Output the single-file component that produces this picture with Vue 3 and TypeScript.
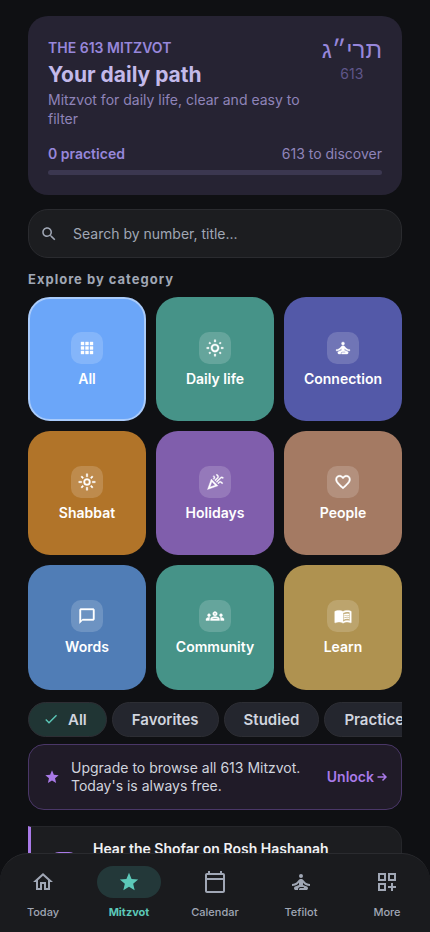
<script setup lang="ts">
import { ref } from 'vue'

interface Category { label: string; icon: string; color: string }

const icons: Record<string, string> = {
  search: 'M15.5 14h-.79l-.28-.27C15.41 12.59 16 11.11 16 9.5 16 5.91 13.09 3 9.5 3S3 5.91 3 9.5 5.91 16 9.5 16c1.61 0 3.09-.59 4.23-1.57l.27.28v.79l5 4.99L20.49 19l-4.99-5zm-6 0C7.01 14 5 11.99 5 9.5S7.01 5 9.5 5 14 7.01 14 9.5 11.99 14 9.5 14z',
  apps: 'M4 8h4V4H4v4zm6 12h4v-4h-4v4zm-6 0h4v-4H4v4zm0-6h4v-4H4v4zm6 0h4v-4h-4v4zm6-10v4h4V4h-4zm-6 4h4V4h-4v4zm6 6h4v-4h-4v4zm0 6h4v-4h-4v4z',
  daily: 'M12 6.5a5.5 5.5 0 1 0 0 11 5.5 5.5 0 0 0 0-11zm0 2.2a3.3 3.3 0 1 1 0 6.6 3.3 3.3 0 0 1 0-6.6zM11 1h2v3h-2zM11 20h2v3h-2zM1 11h3v2H1zM20 11h3v2h-3zM5 3.9l1.6 1.6-1.4 1.4-1.6-1.6zM19 3.9l1.4 1.4-1.6 1.6-1.4-1.4zM5.2 17.1l1.4 1.4L5 20.1l-1.4-1.4zM18.8 17.1l1.6 1.6-1.4 1.4-1.6-1.6z',
  sunny: 'M12 7.3a4.7 4.7 0 1 0 0 9.4 4.7 4.7 0 0 0 0-9.4zm0 2a2.7 2.7 0 1 1 0 5.4 2.7 2.7 0 0 1 0-5.4zM11 1h2v4h-2zM11 19h2v4h-2zM1 11h4v2H1zM19 11h4v2h-4zM5.2 3.8l2.4 2.4-1.4 1.4-2.4-2.4zM18.8 3.8l1.4 1.4-2.4 2.4-1.4-1.4zM6.2 16.4l1.4 1.4-2.4 2.4-1.4-1.4zM17.8 16.4l2.4 2.4-1.4 1.4-2.4-2.4z',
  meditate: 'M12 4a2 2 0 1 0 0 4 2 2 0 0 0 0-4zM21 16v-2c-2.24 0-4.16-.96-5.6-2.68l-1.34-1.6C13.68 9.26 13.12 9 12.53 9h-1.05c-.6 0-1.15.26-1.53.72l-1.34 1.6C7.16 13.04 5.24 14 3 14v2c2.77 0 5.19-1.17 7-3.25V15l-3.88 1.55C5.45 16.82 5 17.48 5 18.21 5 19.2 5.8 20 6.79 20H9v-.5c0-1.38 1.12-2.5 2.5-2.5h3c.28 0 .5.22.5.5s-.22.5-.5.5h-3c-.83 0-1.5.67-1.5 1.5v.5h7.21c.99 0 1.79-.8 1.79-1.79 0-.73-.45-1.39-1.12-1.66L14 15v-2.25c1.81 2.08 4.23 3.25 7 3.25z',
  party: 'M2 22l14-5-9-9-5 14zm10.35-5.82L5.3 18.7l2.52-7.05 4.53 4.53zM14.53 12.53l5.59-5.59c.49-.49 1.28-.49 1.77 0l.59.59 1.06-1.06-.59-.59c-1.07-1.07-2.82-1.07-3.89 0l-5.59 5.59 1.06 1.06zM10.06 6.88l-.59.59 1.06 1.06.59-.59c1.07-1.07 1.07-2.82 0-3.89l-.59-.59-1.06 1.07.59.59c.48.48.48 1.28 0 1.76zM17.06 11.88l-1.59 1.59 1.06 1.06 1.59-1.59c.49-.49 1.28-.49 1.77 0l1.61 1.61 1.06-1.06-1.61-1.61c-1.08-1.07-2.82-1.07-3.9 0zM15.06 5.88l-3.59 3.59 1.06 1.06 3.59-3.59c1.07-1.07 1.07-2.82 0-3.89l-1.59-1.59-1.06 1.06 1.59 1.59c.48.49.48 1.29 0 1.77z',
  heart: 'M16.5 3c-1.74 0-3.41.81-4.5 2.09C10.91 3.81 9.24 3 7.5 3 4.42 3 2 5.42 2 8.5c0 3.78 3.4 6.86 8.55 11.54L12 21.35l1.45-1.32C18.6 15.36 22 12.28 22 8.5 22 5.42 19.58 3 16.5 3zm-4.4 15.55l-.1.1-.1-.1C7.14 14.24 4 11.39 4 8.5 4 6.5 5.5 5 7.5 5c1.54 0 3.04.99 3.57 2.36h1.87C13.46 5.99 14.96 5 16.5 5c2 0 3.5 1.5 3.5 3.5 0 2.89-3.14 5.74-7.9 10.05z',
  chat: 'M20 2H4c-1.1 0-2 .9-2 2v18l4-4h14c1.1 0 2-.9 2-2V4c0-1.1-.9-2-2-2zm0 14H6l-2 2V4h16v12z',
  groups: 'M4 13c1.1 0 2-.9 2-2s-.9-2-2-2-2 .9-2 2 .9 2 2 2zm1.13 1.1c-.37-.06-.74-.1-1.13-.1-.99 0-1.93.21-2.78.58C.48 14.9 0 15.62 0 16.43V18h4.5v-1.61c0-.83.23-1.61.63-2.29zM20 13c1.1 0 2-.9 2-2s-.9-2-2-2-2 .9-2 2 .9 2 2 2zm4 3.43c0-.81-.48-1.53-1.22-1.85-.85-.37-1.79-.58-2.78-.58-.39 0-.76.04-1.13.1.4.68.63 1.46.63 2.29V18H24v-1.57zm-7.76-2.78c-1.17-.52-2.61-.9-4.24-.9s-3.07.39-4.24.9C6.68 14.13 6 15.21 6 16.39V18h12v-1.61c0-1.18-.68-2.26-1.76-2.74zM8.07 16c.09-.23.13-.39.91-.69.97-.38 1.99-.56 3.02-.56s2.05.18 3.02.56c.77.3.81.46.91.69H8.07zM12 8c.55 0 1 .45 1 1s-.45 1-1 1-1-.45-1-1 .45-1 1-1m0-2c-1.66 0-3 1.34-3 3s1.34 3 3 3 3-1.34 3-3-1.34-3-3-3z',
  book: 'M21 5c-1.11-.35-2.33-.5-3.5-.5-1.95 0-4.05.4-5.5 1.5-1.45-1.1-3.55-1.5-5.5-1.5S2.45 4.9 1 6v14.65c0 .25.25.5.5.5.1 0 .15-.05.25-.05C3.1 20.45 5.05 20 6.5 20c1.95 0 4.05.4 5.5 1.5 1.35-.85 3.8-1.5 5.5-1.5 1.65 0 3.35.3 4.75 1.05.1.05.15.05.25.05.25 0 .5-.25.5-.5V6c-.6-.45-1.25-.75-2-1zm0 13.5c-1.1-.35-2.3-.5-3.5-.5-1.7 0-4.15.65-5.5 1.5V8c1.35-.85 3.8-1.5 5.5-1.5 1.2 0 2.4.15 3.5.5v11.5zM17.5 10.5c.88 0 1.73.09 2.5.26V9.24c-.79-.15-1.64-.24-2.5-.24-1.7 0-3.24.29-4.5.83v1.66c1.13-.64 2.7-.99 4.5-.99zM13 12.49v1.66c1.13-.64 2.7-.99 4.5-.99.88 0 1.73.09 2.5.26V11.9c-.79-.15-1.64-.24-2.5-.24-1.7 0-3.24.3-4.5.83zM17.5 14.33c-1.7 0-3.24.29-4.5.83v1.66c1.13-.64 2.7-.99 4.5-.99.88 0 1.73.09 2.5.26v-1.52c-.79-.16-1.64-.24-2.5-.24z',
  check: 'M9 16.17L4.83 12l-1.42 1.41L9 19 21 7l-1.41-1.41z',
  star: 'M12 17.27L18.18 21l-1.64-7.03L22 9.24l-7.19-.61L12 2 9.19 8.63 2 9.24l5.46 4.73L5.82 21z',
  home: 'M12 5.69l5 4.5V18h-2v-6H9v6H7v-7.81l5-4.5M12 3L2 12h3v8h6v-6h2v6h6v-8h3L12 3z',
  calendar: 'M20 3h-1V1h-2v2H7V1H5v2H4c-1.1 0-2 .9-2 2v16c0 1.1.9 2 2 2h16c1.1 0 2-.9 2-2V5c0-1.1-.9-2-2-2zm0 18H4V10h16v11zm0-13H4V5h16v3z',
  more: 'M3 11h8V3H3v8zm2-6h4v4H5V5zM13 3v8h8V3h-8zm6 6h-4V5h4v4zM3 21h8v-8H3v8zm2-6h4v4H5v-4zM18 13h-2v3h-3v2h3v3h2v-3h3v-2h-3v-3z',
}

const categories: Category[] = [
  { label: 'All', icon: 'apps', color: '#6ba6f9' },
  { label: 'Daily life', icon: 'daily', color: '#469388' },
  { label: 'Connection', icon: 'meditate', color: '#5359a8' },
  { label: 'Shabbat', icon: 'sunny', color: '#b17429' },
  { label: 'Holidays', icon: 'party', color: '#805eac' },
  { label: 'People', icon: 'heart', color: '#a47a63' },
  { label: 'Words', icon: 'chat', color: '#507db6' },
  { label: 'Community', icon: 'groups', color: '#469388' },
  { label: 'Learn', icon: 'book', color: '#af9250' },
]
const filters = ['All', 'Favorites', 'Studied', 'Practiced']
const tabs = [
  { label: 'Today', icon: 'home' },
  { label: 'Mitzvot', icon: 'star' },
  { label: 'Calendar', icon: 'calendar' },
  { label: 'Tefilot', icon: 'meditate' },
  { label: 'More', icon: 'more' },
]

const query = ref('')
const category = ref('All')
const filter = ref('All')
const practiced = ref(0)
</script>

<template>
  <div class="app">
    <main class="content">
      <section class="hero">
        <div class="hero-top">
          <div class="hero-text">
            <p class="eyebrow">THE 613 MITZVOT</p>
            <h1>Your daily path</h1>
            <p class="sub">Mitzvot for daily life, clear and easy to filter</p>
          </div>
          <div class="count">
            <span class="hebrew" lang="he">תרי״ג</span>
            <span class="number">613</span>
          </div>
        </div>
        <div class="stats">
          <strong>{{ practiced }} practiced</strong>
          <span>{{ 613 - practiced }} to discover</span>
        </div>
        <div class="track"><div class="fill" :style="{ width: (practiced / 613) * 100 + '%' }"></div></div>
      </section>

      <label class="search">
        <svg viewBox="0 0 24 24"><path :d="icons.search" /></svg>
        <input v-model="query" type="text" placeholder="Search by number, title..." />
      </label>

      <h2>Explore by category</h2>
      <div class="grid">
        <button
          v-for="c in categories"
          :key="c.label"
          class="tile"
          :class="{ selected: category === c.label }"
          :style="{ backgroundColor: c.color }"
          @click="category = c.label"
        >
          <span class="badge"><svg viewBox="0 0 24 24"><path fill-rule="evenodd" :d="icons[c.icon]" /></svg></span>
          <span>{{ c.label }}</span>
        </button>
      </div>

      <div class="chips">
        <button v-for="f in filters" :key="f" class="chip" :class="{ on: filter === f }" @click="filter = f">
          <svg v-if="filter === f" viewBox="0 0 24 24"><path :d="icons.check" /></svg>{{ f }}
        </button>
      </div>

      <section class="upgrade">
        <svg class="up-star" viewBox="0 0 24 24"><path :d="icons.star" /></svg>
        <p>Upgrade to browse all 613 Mitzvot. Today's is always free.</p>
        <a href="#unlock">Unlock
          <svg viewBox="0 0 10 10"><path d="M0.5 5H9M5.5 1.5L9 5L5.5 8.5" /></svg>
        </a>
      </section>

      <article class="mitzvah">
        <span class="thumb"></span>
        <h3>Hear the Shofar on Rosh Hashanah</h3>
      </article>
    </main>

    <nav class="tabs">
      <a v-for="t in tabs" :key="t.label" :href="'#' + t.label.toLowerCase()" :class="{ active: t.label === 'Mitzvot' }">
        <span class="pill"><svg viewBox="0 0 24 24"><path :d="icons[t.icon]" /></svg></span>
        <span>{{ t.label }}</span>
      </a>
    </nav>
  </div>
</template>

<style>
body { background: #0f1013; }
</style>

<style scoped>
* { box-sizing: border-box; margin: 0; }
button, input { font: inherit; color: inherit; }
svg { fill: currentColor; flex: none; display: block; }
.app {
  height: 100vh;
  overflow: hidden;
  position: relative;
  background: #0f1013;
  color: #e6e7ec;
  font-family: Inter, "Liberation Sans", sans-serif;
  font-size: 14px;
}
.content {
  height: 100%;
  overflow-y: auto;
  scrollbar-width: none;
  padding: 16px 28px 96px;
}
.hero {
  background: #262333;
  border-radius: 20px;
  padding: 20px;
}
.hero-top { display: flex; justify-content: space-between; gap: 16px; }
.hero-text { flex: 1; }
.eyebrow { color: #9787db; line-height: 24px; font-weight: 600; }
h1 { color: #c3b9ea; font-size: 21px; line-height: 30px; font-weight: 700; }
.sub { color: #8f84b9; line-height: 19px; }
.count { display: flex; flex-direction: column; align-items: center; }
.hebrew { font-family: "Liberation Sans", sans-serif; font-size: 24px; line-height: 28px; color: #9787db; }
.number { color: #5f568a; line-height: 20px; }
.stats { display: flex; justify-content: space-between; margin-top: 16px; line-height: 20px; color: #8f84b9; }
.stats strong { color: #9787db; font-weight: 600; }
.track { height: 5px; border-radius: 3px; background: #3b3750; margin-top: 6px; }
.fill { height: 100%; border-radius: 3px; background: #9787db; }
.search {
  display: flex;
  align-items: center;
  gap: 15px;
  height: 49px;
  margin-top: 14px;
  padding: 0 11px;
  border: 1px solid #2a2b2f;
  border-radius: 20px;
  background: #1c1d20;
  color: #a0a7b5;
}
.search svg { width: 18px; height: 18px; }
.search input { flex: 1; min-width: 0; border: 0; outline: 0; background: none; padding: 0; }
.search input::placeholder { color: #a0a7b5; opacity: 1; }
h2 { font-size: 13px; line-height: 18px; font-weight: 700; letter-spacing: 1px; color: #a0a7b5; margin: 12px 0 9px; }
.grid { display: grid; grid-template-columns: repeat(3, 1fr); gap: 10px; }
.tile {
  aspect-ratio: 0.95;
  border: 0;
  border-radius: 22px;
  padding: 1px 0 0;
  display: flex;
  flex-direction: column;
  align-items: center;
  justify-content: center;
  gap: 6px;
  color: #fff;
  font-weight: 600;
  line-height: 18px;
}
.tile.selected { border: 2px solid #a9cbfb; }
.badge {
  width: 32px;
  height: 32px;
  border-radius: 10px;
  background: rgba(255, 255, 255, 0.17);
  display: grid;
  place-items: center;
}
.badge svg { width: 18px; height: 18px; stroke: currentColor; stroke-width: 0.5; overflow: visible; }
.chips { display: flex; gap: 5px; overflow: hidden; margin-top: 12px; }
.chip {
  flex: none;
  display: flex;
  align-items: center;
  height: 35px;
  padding: 0 19px;
  border: 1px solid #2d2e34;
  border-radius: 18px;
  background: #24262e;
  color: #d0d4de;
  font-size: 15px;
  font-weight: 600;
}
.chip.on { background: #203534; padding: 0 19px 0 14px; gap: 9px; }
.chip svg { width: 16px; height: 16px; color: #5cc8b8; }
.upgrade {
  display: flex;
  align-items: center;
  margin-top: 7px;
  padding: 14px 14px 14px 15px;
  border: 1px solid #4a3768;
  border-radius: 16px;
  background: #201b28;
}
.up-star { width: 16px; height: 16px; color: #a97ae8; }
.upgrade p { flex: 1; margin: 0 16px 0 11px; line-height: 18px; color: #d0d4de; }
.upgrade a { display: flex; align-items: center; gap: 3px; color: #a97ae8; text-decoration: none; font-weight: 600; }
.upgrade a svg { width: 10px; height: 10px; fill: none; stroke: currentColor; stroke-width: 1.5; }
.mitzvah {
  display: flex;
  gap: 16px;
  margin-top: 16px;
  min-height: 90px;
  padding: 12px 20px 20px;
  border: 1px solid #25262a;
  border-left: 3px solid #a97ae8;
  border-radius: 0 16px 16px 0;
  background: #1c1d20;
}
.thumb { width: 26px; height: 26px; margin-top: 13px; border-radius: 8px; background: #a97ae8; }
h3 { font-size: 14px; line-height: 20px; font-weight: 600; color: #f0f1f4; }
.tabs {
  position: absolute;
  left: 0;
  right: 0;
  bottom: 0;
  display: flex;
  padding: 12px 0;
  border-top: 1px solid #2a2b2f;
  border-radius: 28px 28px 0 0;
  background: #1a1b1e;
}
.tabs a {
  flex: 1;
  display: flex;
  flex-direction: column;
  align-items: center;
  gap: 6px;
  color: #a0a7b5;
  text-decoration: none;
  font-size: 11px;
  line-height: 16px;
  font-weight: 500;
}
.pill { width: 64px; height: 32px; border-radius: 16px; display: grid; place-items: center; }
.pill svg { width: 24px; height: 24px; }
.active .pill { background: #233839; }
.active .pill svg { width: 22px; height: 22px; }
.tabs a.active { color: #5cc8b8; font-weight: 700; }
</style>
